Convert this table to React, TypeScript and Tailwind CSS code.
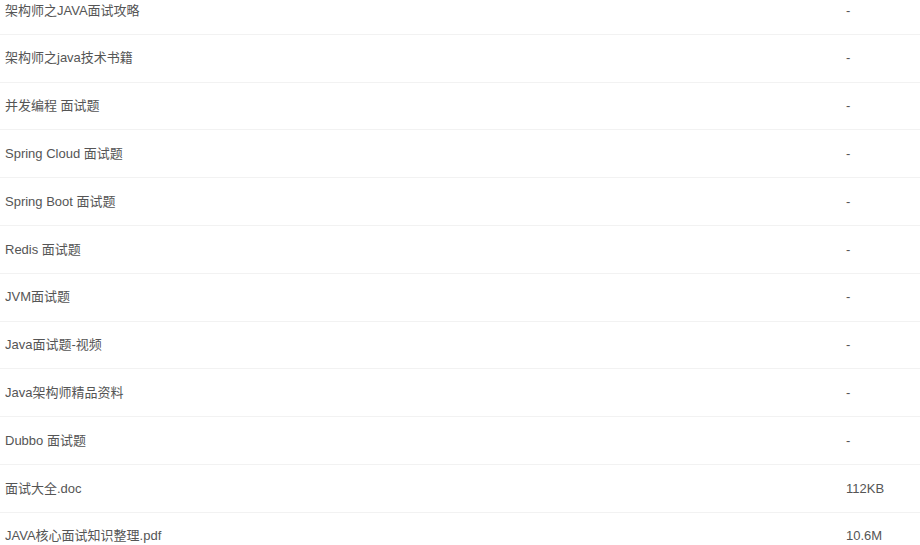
const ROWS: { name: string; size: string }[] = [
  { name: "架构师之JAVA面试攻略", size: "-" },
  { name: "架构师之java技术书籍", size: "-" },
  { name: "并发编程 面试题", size: "-" },
  { name: "Spring Cloud 面试题", size: "-" },
  { name: "Spring Boot 面试题", size: "-" },
  { name: "Redis 面试题", size: "-" },
  { name: "JVM面试题", size: "-" },
  { name: "Java面试题-视频", size: "-" },
  { name: "Java架构师精品资料", size: "-" },
  { name: "Dubbo 面试题", size: "-" },
  { name: "面试大全.doc", size: "112KB" },
  { name: "JAVA核心面试知识整理.pdf", size: "10.6M" },
];

export default function App() {
  return (
    <div className="w-[920px] h-[545px] overflow-hidden bg-white font-['Liberation_Sans','Noto_Sans_CJK_SC',sans-serif] text-[13px] text-[#555]">
      <div className="-mt-[13px]">
        {ROWS.map((row) => (
          <div
            key={row.name}
            className="flex items-center h-[47.8px] border-b border-[#f2f2f2] pl-[5px]"
          >
            <div className="flex-1 truncate">{row.name}</div>
            <div className="w-[74px]">{row.size}</div>
          </div>
        ))}
      </div>
    </div>
  );
}
